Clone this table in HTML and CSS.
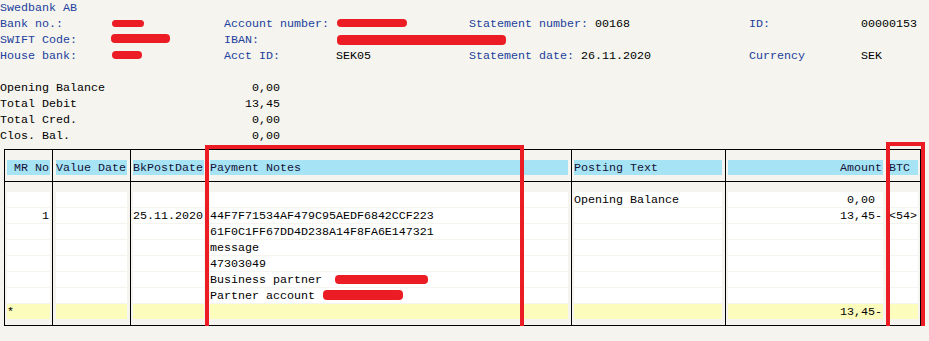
FILE: index.html
```html
<!DOCTYPE html>
<html lang="en">
<head>
<meta charset="utf-8">
<title>Account statement</title>
<link rel="stylesheet" href="styles.css">
</head>
<body>
<div class="page">
  <div class="bank lbl">Swedbank AB</div>
  <div class="info">
    <span class="lbl">Bank no.:</span>
    <span><i class="redact r-bank"></i></span>
    <span class="lbl">Account number:</span>
    <span><i class="redact r-acct"></i></span>
    <span><span class="lbl">Statement number:</span> 00168</span>
    <span class="lbl">ID:</span>
    <span>00000153</span>

    <span class="lbl">SWIFT Code:</span>
    <span><i class="redact r-swift"></i></span>
    <span class="lbl">IBAN:</span>
    <span><i class="redact r-iban"></i></span>
    <span></span>
    <span></span>
    <span></span>

    <span class="lbl">House bank:</span>
    <span><i class="redact r-house"></i></span>
    <span class="lbl">Acct ID:</span>
    <span>SEK05</span>
    <span><span class="lbl">Statement date:</span> 26.11.2020</span>
    <span class="lbl">Currency</span>
    <span>SEK</span>
  </div>

  <div class="balances">
    <div class="bal"><span>Opening Balance</span><span>0,00</span></div>
    <div class="bal"><span>Total Debit</span><span>13,45</span></div>
    <div class="bal"><span>Total Cred.</span><span>0,00</span></div>
    <div class="bal"><span>Clos. Bal.</span><span>0,00</span></div>
  </div>

  <div class="stmt">
    <div class="row head">
      <div class="c r">MR No</div>
      <div class="c">Value Date</div>
      <div class="c">BkPostDate</div>
      <div class="c">Payment Notes</div>
      <div class="c">Posting Text</div>
      <div class="c r">Amount</div>
      <div class="c">BTC</div>
    </div>
    <div class="hline"></div>
    <div class="body">
      <div class="row">
        <div class="c r"></div><div class="c"></div><div class="c"></div><div class="c"></div>
        <div class="c">Opening Balance</div><div class="c r">0,00 </div><div class="c"></div>
      </div>
      <div class="row">
        <div class="c r">1</div><div class="c"></div><div class="c">25.11.2020</div>
        <div class="c">44F7F71534AF479C95AEDF6842CCF223</div>
        <div class="c"></div><div class="c r">13,45-</div><div class="c">&lt;54&gt;</div>
      </div>
      <div class="row">
        <div class="c r"></div><div class="c"></div><div class="c"></div>
        <div class="c">61F0C1FF67DD4D238A14F8FA6E147321</div>
        <div class="c"></div><div class="c r"></div><div class="c"></div>
      </div>
      <div class="row">
        <div class="c r"></div><div class="c"></div><div class="c"></div>
        <div class="c">message</div>
        <div class="c"></div><div class="c r"></div><div class="c"></div>
      </div>
      <div class="row">
        <div class="c r"></div><div class="c"></div><div class="c"></div>
        <div class="c">47303049</div>
        <div class="c"></div><div class="c r"></div><div class="c"></div>
      </div>
      <div class="row">
        <div class="c r"></div><div class="c"></div><div class="c"></div>
        <div class="c">Business partner<i class="redact r-bp"></i></div>
        <div class="c"></div><div class="c r"></div><div class="c"></div>
      </div>
      <div class="row">
        <div class="c r"></div><div class="c"></div><div class="c"></div>
        <div class="c">Partner account<i class="redact r-pa"></i></div>
        <div class="c"></div><div class="c r"></div><div class="c"></div>
      </div>
    </div>
    <div class="row total">
      <div class="c">*</div><div class="c"></div><div class="c"></div><div class="c"></div>
      <div class="c"></div><div class="c r">13,45-</div><div class="c"></div>
    </div>
  </div>

  <div class="mark mark-notes"></div>
  <div class="mark mark-btc"></div>
</div>
</body>
</html>
```

FILE: styles.css
```css
html, body {
  margin: 0;
  padding: 0;
  background: #f5f4ee;
}

.page {
  position: relative;
  font-family: "Liberation Mono", "Courier New", monospace;
  font-size: 11.6667px;
  line-height: 16px;
  color: #000;
}

.lbl {
  color: #22409c;
}

.bank {
  height: 16px;
}

.bank, .info > span, .bal > span, .c {
  white-space: pre;
}

.info {
  display: grid;
  grid-template-columns: 112px 112px 112px 133px 280px 112px auto;
  grid-auto-rows: 16px;
}

.info > span {
  display: block;
  height: 16px;
}

.redact {
  display: block;
  background: #ec1c24;
  border-radius: 4px;
}

.r-bank  { width: 32px;  height: 7px;  margin-top: 4px; }
.r-swift { width: 59px;  height: 9px;  margin-top: 2px; margin-left: -1px; }
.r-house { width: 30px;  height: 8px;  margin-top: 3px; }
.r-acct  { width: 70px;  height: 8px;  margin-top: 3px; margin-left: 1px; }
.r-iban  { width: 169px; height: 10px; margin-top: 3px; margin-left: 1px; }

.r-bp, .r-pa {
  display: inline-block;
  vertical-align: top;
}
.r-bp { width: 93px; height: 9px;  margin: 3px 0 0 13px; }
.r-pa { width: 80px; height: 10px; margin: 2px 0 0 8px; }

.balances {
  margin-top: 16px;
  width: 280px;
}

.bal {
  display: flex;
  justify-content: space-between;
  height: 16px;
}

.stmt {
  margin: 5px 0 0 4px;
  width: 917px;
  box-sizing: border-box;
  border: 1px solid #000;
  padding: 10px 0 6px;
  background:
    linear-gradient(#000, #000) 47px 0 / 1px 100% no-repeat,
    linear-gradient(#000, #000) 125px 0 / 1px 100% no-repeat,
    linear-gradient(#000, #000) 202px 0 / 1px 100% no-repeat,
    linear-gradient(#000, #000) 566px 0 / 1px 100% no-repeat,
    linear-gradient(#000, #000) 720px 0 / 1px 100% no-repeat,
    #f5f4ee;
}

.row {
  display: grid;
  grid-template-columns: 43px 71px 71px 358px 148px 155px 29px;
  column-gap: 6px;
  padding-left: 2px;
  height: 15px;
}

.c {
  height: 15px;
  line-height: 16px;
  overflow: visible;
}

.c.r {
  text-align: right;
  padding-right: 1px;
}

.head .c {
  background: #a6e3f5;
  color: #141438;
}

.hline {
  height: 1px;
  margin: 6px 0 10px;
  background: #000;
}

.body {
  display: grid;
  row-gap: 1px;
  margin-bottom: 1px;
}

.body .c {
  background: #fff;
}

.total .c {
  background: #fcfcbd;
}

.mark {
  position: absolute;
  box-sizing: border-box;
  border: 4px solid #ec1c24;
}

.mark-notes {
  left: 205px;
  top: 145px;
  width: 319px;
  height: 194px;
}

.mark-btc {
  left: 886px;
  top: 142px;
  width: 39px;
  height: 189px;
}
```
